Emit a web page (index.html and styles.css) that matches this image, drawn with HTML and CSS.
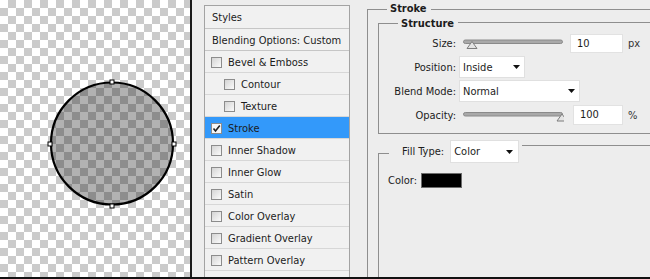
FILE: index.html
```html
<!DOCTYPE html>
<html lang="en">

<head>
    <meta charset="UTF-8">
    <title>Layer Style - Stroke</title>
    <link rel="stylesheet" href="styles.css">
</head>

<body>
    <div class="app">
        <div class="canvas">
            <svg width="190" height="277" viewBox="0 0 190 277">
                <circle cx="112" cy="143.5" r="61" fill="rgba(0,0,0,0.3)" stroke="#000" stroke-width="2.2" />
                <rect x="110" y="80" width="4" height="4" fill="#fff" stroke="#000" />
                <rect x="110" y="204" width="4" height="4" fill="#fff" stroke="#000" />
                <rect x="48" y="142" width="4" height="4" fill="#fff" stroke="#000" />
                <rect x="172" y="142" width="4" height="4" fill="#fff" stroke="#000" />
            </svg>
        </div>

        <div class="panel">
            <div class="style-list">
                <div class="list-head">Styles</div>
                <div class="list-row plain">Blending Options: Custom</div>
                <div class="list-row"><span class="check"></span>Bevel &amp; Emboss</div>
                <div class="list-row sub"><span class="check"></span>Contour</div>
                <div class="list-row sub"><span class="check"></span>Texture</div>
                <div class="list-row selected">
                    <span class="check checked">
                        <svg width="9" height="9" viewBox="0 0 9 9"><path d="M1.5 4.5 L3.5 7 L7.8 1.5" fill="none" stroke="#222" stroke-width="1.6" /></svg>
                    </span>Stroke
                </div>
                <div class="list-row"><span class="check"></span>Inner Shadow</div>
                <div class="list-row"><span class="check"></span>Inner Glow</div>
                <div class="list-row"><span class="check"></span>Satin</div>
                <div class="list-row"><span class="check"></span>Color Overlay</div>
                <div class="list-row"><span class="check"></span>Gradient Overlay</div>
                <div class="list-row"><span class="check"></span>Pattern Overlay</div>
                <div class="list-row"><span class="check"></span></div>
            </div>

            <div class="settings">
                <div class="group-head">
                    <span class="seg"></span><span class="legend">Stroke</span><span class="rest"></span>
                </div>
                <div class="stroke-body">
                    <div class="group-head small">
                        <span class="seg"></span><span class="legend">Structure</span><span class="rest"></span>
                    </div>
                    <div class="structure-body">
                        <div class="field-row">
                            <span class="field-label">Size:</span>
                            <svg class="slider" width="101" height="14" viewBox="0 0 101 14">
                                <rect x="0.5" y="4" width="99" height="3.5" rx="1.8" fill="#a9a9a9" stroke="#8a8a8a" />
                                <path d="M4 12.5 L9 5.5 L14 12.5 Z" fill="#e4e4e4" stroke="#7d7d7d" />
                            </svg>
                            <span class="num size-num">10</span>
                            <span class="unit">px</span>
                        </div>
                        <div class="field-row">
                            <span class="field-label">Position:</span>
                            <span class="dropdown position">Inside
                                <svg width="7" height="4" viewBox="0 0 7 4"><path d="M0 0 H7 L3.5 4 Z" fill="#111" /></svg>
                            </span>
                        </div>
                        <div class="field-row">
                            <span class="field-label">Blend Mode:</span>
                            <span class="dropdown blend">Normal
                                <svg width="7" height="4" viewBox="0 0 7 4"><path d="M0 0 H7 L3.5 4 Z" fill="#111" /></svg>
                            </span>
                        </div>
                        <div class="field-row">
                            <span class="field-label">Opacity:</span>
                            <svg class="slider" width="101" height="14" viewBox="0 0 101 14">
                                <rect x="0.5" y="4.5" width="99" height="3.5" rx="1.8" fill="#a9a9a9" stroke="#8a8a8a" />
                                <path d="M94 13 L99 6 L104 13 Z" fill="#e4e4e4" stroke="#7d7d7d" />
                            </svg>
                            <span class="num opacity-num">100</span>
                            <span class="unit">%</span>
                        </div>
                    </div>

                    <div class="fill-head">
                        <span class="seg"></span>
                        <span class="fill-label">Fill Type:</span>
                        <span class="dropdown fill-type">Color
                            <svg width="7" height="4" viewBox="0 0 7 4"><path d="M0 0 H7 L3.5 4 Z" fill="#111" /></svg>
                        </span>
                        <span class="rest"></span>
                    </div>
                    <div class="fill-body">
                        <div class="color-row">
                            <span>Color:</span>
                            <span class="swatch"></span>
                        </div>
                    </div>
                </div>
            </div>
        </div>
    </div>
</body>

</html>
```

FILE: styles.css
```css
* {
    box-sizing: border-box;
}

body {
    margin: 0;
    padding: 0;
    font-family: "DejaVu Sans Condensed", "DejaVu Sans", sans-serif;
    font-stretch: condensed;
    font-size: 11px;
    color: #1c1c1c;
    background: #ededed;
    overflow: hidden;
}

.app {
    display: flex;
    width: 650px;
    height: 279px;
    border-bottom: 2px solid #111;
    overflow: hidden;
}

/* canvas with transparency checkerboard */
.canvas {
    flex: none;
    width: 192px;
    border-right: 2px solid #1b1b1b;
    background: repeating-conic-gradient(#cbcbcb 0 25%, #fff 0 50%) 0 0 / 16px 16px;
}

.canvas svg {
    display: block;
}

.panel {
    flex: none;
    display: flex;
    width: 520px;
    background: #ededed;
}

/* styles list */
.style-list {
    flex: none;
    width: 146px;
    margin: 5px 0 0 12px;
    border: 1px solid #a3a3a3;
    border-bottom: none;
    background: #f1f1f1;
}

.list-head {
    height: 23px;
    line-height: 22px;
    padding: 1px 0 0 7px;
    border-bottom: 1px solid #c6c6c6;
}

.list-row {
    display: flex;
    align-items: center;
    height: 22px;
    padding: 1px 0 0 6px;
    border-bottom: 1px solid #d7d7d7;
    white-space: nowrap;
}

.list-row.plain {
    padding-left: 7px;
    border-bottom-color: #c6c6c6;
}

.list-row.sub {
    padding-left: 19px;
}

.list-row.selected {
    background: #3399fa;
}

.check {
    flex: none;
    display: flex;
    align-items: center;
    justify-content: center;
    width: 11px;
    height: 11px;
    margin-right: 6px;
    border: 1px solid #8c8c8c;
    background: linear-gradient(135deg, #d4d4d4, #fbfbfb);
}

.check.checked {
    background: #f7f7f7;
}

/* settings side */
.settings {
    flex: none;
    width: 320px;
    margin-left: 17px;
}

.group-head {
    display: flex;
    height: 17px;
}

.group-head.small {
    height: 13px;
}

.seg {
    flex: none;
    width: 20px;
    height: 8px;
    align-self: flex-end;
    border-top: 1px solid #8e8e8e;
    border-left: 1px solid #8e8e8e;
}

.group-head.small .seg {
    height: 7px;
}

.legend {
    font-weight: bold;
    padding: 0 4px 0 3px;
    line-height: 17px;
}

.group-head.small .legend {
    line-height: 13px;
}

.rest {
    flex: 1;
    height: 8px;
    align-self: flex-end;
    border-top: 1px solid #8e8e8e;
}

.stroke-body {
    height: 262px;
    padding-left: 10px;
    border-left: 1px solid #8e8e8e;
}

.structure-body {
    padding: 1px 0 6px;
    border-left: 1px solid #8e8e8e;
    border-bottom: 1px solid #8e8e8e;
}

.field-row {
    display: flex;
    align-items: center;
    height: 24px;
}

.field-label {
    flex: none;
    width: 77px;
    margin-right: 3px;
    text-align: right;
}

.slider {
    flex: none;
    margin-left: 4px;
}

.num {
    height: 19px;
    line-height: 17px;
    padding-left: 6px;
    background: #fff;
    border: 1px solid #e2e2e2;
}

.size-num {
    width: 53px;
    margin-left: 6px;
}

.opacity-num {
    width: 50px;
    height: 20px;
    margin-left: 9px;
}

.unit {
    margin-left: 5px;
    color: #333;
}

.dropdown {
    display: flex;
    align-items: center;
    justify-content: space-between;
    height: 22px;
    padding: 0 4px 0 3px;
    background: #fff;
    border: 1px solid #e0e0e0;
}

.dropdown.position {
    width: 66px;
}

.dropdown.blend {
    width: 121px;
}

/* fill group */
.fill-head {
    display: flex;
    height: 23px;
    margin-top: 6px;
}

.fill-head .seg {
    width: 11px;
    height: 10px;
}

.fill-label {
    margin-left: 13px;
    margin-right: 6px;
    align-self: center;
}

.dropdown.fill-type {
    width: 69px;
    height: 23px;
    padding-right: 5px;
}

.fill-head .rest {
    height: auto;
    align-self: flex-start;
    margin-top: 5px;
    margin-left: 3px;
}

.fill-body {
    height: 120px;
    padding: 10px 0 0 9px;
    border-left: 1px solid #8e8e8e;
}

.color-row {
    display: flex;
    align-items: center;
    height: 15px;
}

.swatch {
    width: 41px;
    height: 15px;
    margin-left: 4px;
    background: #000;
    border: 1px solid #6d6d6d;
}
```
